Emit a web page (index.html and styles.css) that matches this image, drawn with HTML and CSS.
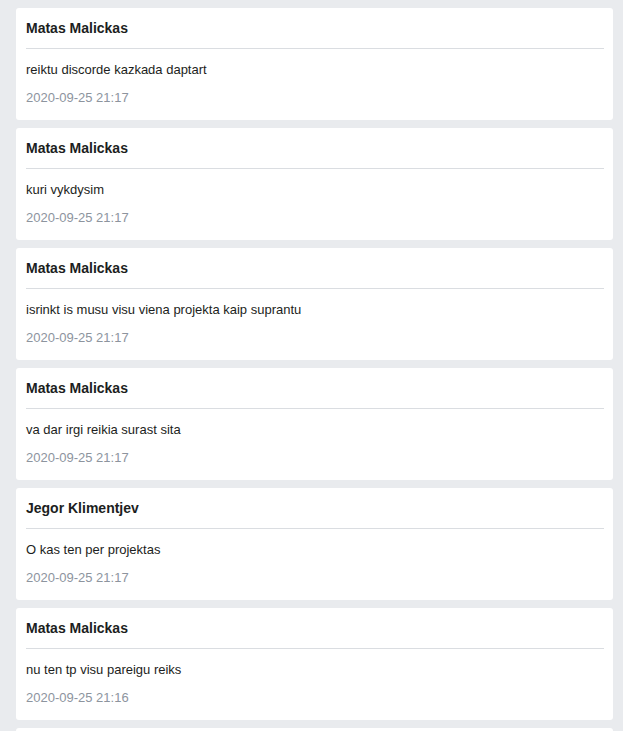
FILE: index.html
```html
<!DOCTYPE html>
<html>
<head>
<meta charset="utf-8">
<link rel="stylesheet" href="styles.css">
</head>
<body>
<div class="feed">
  <div class="card"><div class="name">Matas Malickas</div><div class="sep"></div><div class="msg">reiktu discorde kazkada daptart</div><div class="date">2020-09-25 21:17</div></div>
  <div class="card"><div class="name">Matas Malickas</div><div class="sep"></div><div class="msg">kuri vykdysim</div><div class="date">2020-09-25 21:17</div></div>
  <div class="card"><div class="name">Matas Malickas</div><div class="sep"></div><div class="msg">isrinkt is musu visu viena projekta kaip suprantu</div><div class="date">2020-09-25 21:17</div></div>
  <div class="card"><div class="name">Matas Malickas</div><div class="sep"></div><div class="msg">va dar irgi reikia surast sita</div><div class="date">2020-09-25 21:17</div></div>
  <div class="card"><div class="name">Jegor Klimentjev</div><div class="sep"></div><div class="msg">O kas ten per projektas</div><div class="date">2020-09-25 21:17</div></div>
  <div class="card"><div class="name">Matas Malickas</div><div class="sep"></div><div class="msg">nu ten tp visu pareigu reiks</div><div class="date">2020-09-25 21:16</div></div>
  <div class="card card-next"></div>
</div>
</body>
</html>
```
FILE: styles.css
```css
html, body {
  margin: 0;
  padding: 0;
  background: #e9ebee;
  overflow: hidden;
}
.feed {
  display: flex;
  flex-direction: column;
  gap: 8px;
  padding: 8px 10px 0 16px;
  font-family: "Liberation Sans", Arial, sans-serif;
  color: #1c1e21;
}
.card {
  background: #ffffff;
  border-radius: 3px;
  padding: 12px 9px 14px 10px;
}
.card-next {
  height: 85px;
}
.name {
  font-size: 14px;
  font-weight: bold;
  line-height: 16px;
  margin-bottom: 12px;
}
.sep {
  height: 1px;
  background: #dadde1;
  margin-bottom: 13px;
}
.msg {
  font-size: 13px;
  line-height: 16px;
  margin-bottom: 12px;
}
.date {
  font-size: 13px;
  line-height: 16px;
  color: #8d949e;
}
```
